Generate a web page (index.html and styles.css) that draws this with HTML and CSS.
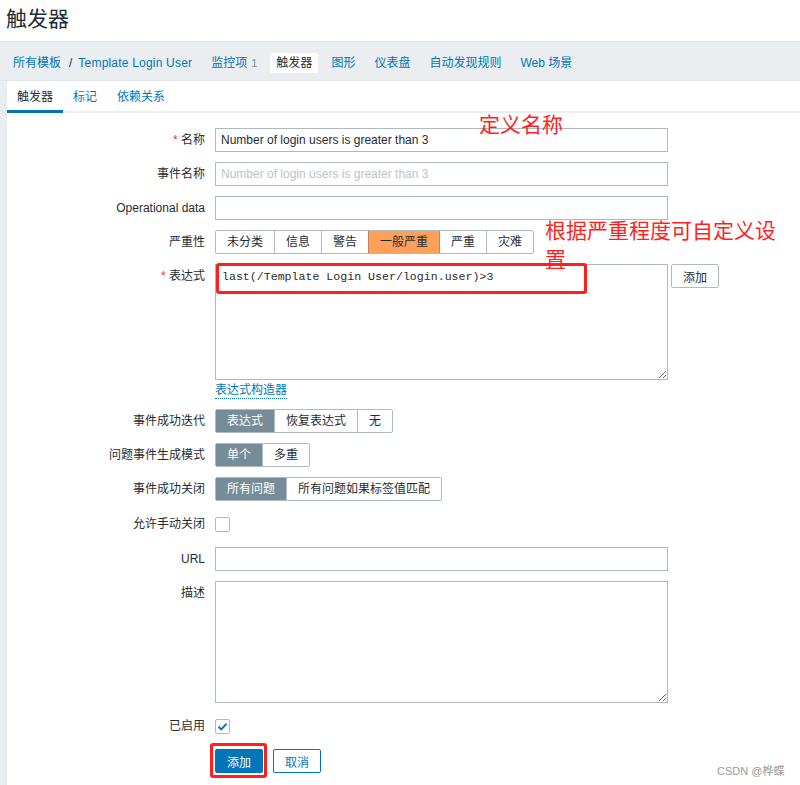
FILE: index.html
```html
<!DOCTYPE html>
<html lang="zh">
<head>
<meta charset="utf-8">
<title>触发器</title>
<link rel="stylesheet" href="styles.css">
</head>
<body>
<header class="header"><h1 class="title">触发器</h1></header>
<nav class="nav">
  <div class="nav-item crumbs"><a class="lnk">所有模板</a><span class="sep">/</span><a class="lnk wide">Template Login User</a></div>
  <div class="nav-item"><a class="lnk">监控项</a><sup class="count">1</sup></div>
  <div class="nav-item active">触发器</div>
  <div class="nav-item"><a class="lnk">图形</a></div>
  <div class="nav-item"><a class="lnk">仪表盘</a></div>
  <div class="nav-item"><a class="lnk">自动发现规则</a></div>
  <div class="nav-item"><a class="lnk">Web 场景</a></div>
</nav>
<main class="panel">
  <div class="tabs">
    <div class="tab active">触发器</div>
    <div class="tab">标记</div>
    <div class="tab">依赖关系</div>
  </div>
  <form class="form">
    <label class="lbl"><span class="req">*</span> 名称</label>
    <div class="field"><input class="inp" type="text" value="Number of login users is greater than 3"></div>

    <label class="lbl">事件名称</label>
    <div class="field"><input class="inp" type="text" placeholder="Number of login users is greater than 3"></div>

    <label class="lbl">Operational data</label>
    <div class="field"><input class="inp" type="text"></div>

    <label class="lbl">严重性</label>
    <div class="field"><div class="seg"><span>未分类</span><span>信息</span><span>警告</span><span class="sev-on">一般严重</span><span>严重</span><span>灾难</span></div></div>

    <label class="lbl"><span class="req">*</span> 表达式</label>
    <div class="field">
      <div class="expr-row">
        <textarea class="area expr">last(/Template Login User/login.user)&gt;3</textarea>
        <button type="button" class="btn-alt">添加</button>
      </div>
      <a class="builder">表达式构造器</a>
    </div>

    <label class="lbl">事件成功迭代</label>
    <div class="field"><div class="seg"><span class="on">表达式</span><span>恢复表达式</span><span>无</span></div></div>

    <label class="lbl">问题事件生成模式</label>
    <div class="field"><div class="seg"><span class="on">单个</span><span>多重</span></div></div>

    <label class="lbl">事件成功关闭</label>
    <div class="field"><div class="seg"><span class="on">所有问题</span><span>所有问题如果标签值匹配</span></div></div>

    <label class="lbl tall">允许手动关闭</label>
    <div class="field tall"><span class="chk"></span></div>

    <label class="lbl">URL</label>
    <div class="field"><input class="inp" type="text"></div>

    <label class="lbl">描述</label>
    <div class="field"><textarea class="area desc"></textarea></div>

    <label class="lbl tall">已启用</label>
    <div class="field tall"><span class="chk checked"><svg width="13" height="13" viewBox="0 0 13 13"><path d="M2.5 6.8 L5.3 9.4 L10.6 3.6" fill="none" stroke="#0275b8" stroke-width="2"/></svg></span></div>

    <div></div>
    <div class="field actions"><button type="button" class="btn-main">添加</button><button type="button" class="btn-cancel">取消</button></div>
  </form>
</main>

<div class="note note-name">定义名称</div>
<div class="note note-sev"><span class="line">根据严重程度可自定义设</span><span class="line">置</span></div>
<div class="mark mark-expr"></div>
<div class="mark mark-add"></div>
<div class="watermark">CSDN @桦蝶</div>
</body>
</html>
```

FILE: styles.css
```css
html {
  background: #ebeef0;
}
body {
  margin: 0;
  position: relative;
  min-height: 785px;
  font-family: "Liberation Sans", Arial, "Noto Sans CJK SC", sans-serif;
  font-size: 12px;
  color: #1f2c33;
}
.header {
  background: #fff;
  height: 41px;
  box-sizing: border-box;
  padding: 6px 0 0 6px;
}
.title {
  margin: 0;
  font-weight: normal;
  font-size: 21px;
  line-height: 26px;
}
.nav {
  display: flex;
  align-items: center;
  gap: 7px;
  height: 40px;
  box-sizing: border-box;
  padding: 3px 0 0 7px;
  border-top: 1px solid #dfe4e7;
  border-bottom: 1px solid #dfe4e7;
}
.nav-item {
  height: 20px;
  line-height: 20px;
  padding: 0 6px;
  border-radius: 2px;
  white-space: nowrap;
}
.nav-item.active {
  background: #fff;
  color: #1f2c33;
}
.lnk {
  color: #0275b8;
}
.lnk.wide {
  letter-spacing: 0.2px;
}
.sep {
  color: #1f2c33;
  margin: 0 6px 0 8px;
}
.count {
  color: #768d99;
  font-size: 11px;
  vertical-align: baseline;
  margin-left: 4px;
}
.panel {
  margin-left: 7px;
  background: #fff;
  min-height: 704px;
}
.tabs {
  display: flex;
  box-shadow: inset 0 -2px 0 #ebeef0;
}
.tab {
  padding: 4px 10px 0;
  line-height: 25px;
  border-bottom: 3px solid transparent;
  color: #0275b8;
}
.tab.active {
  color: #1f2c33;
  border-bottom-color: #0275b8;
}
.form {
  display: grid;
  grid-template-columns: 198px auto;
  column-gap: 10px;
  row-gap: 10px;
  padding-top: 15px;
}
.lbl {
  text-align: right;
  line-height: 24px;
  white-space: nowrap;
}
.lbl.tall, .field.tall {
  line-height: 26px;
  height: 26px;
}
.req {
  color: #e33734;
}
.field {
  min-height: 24px;
}
.field.tall {
  display: flex;
  align-items: center;
}
.inp {
  box-sizing: border-box;
  width: 453px;
  height: 24px;
  border: 1px solid #acbbc2;
  border-radius: 0;
  padding: 0 5px;
  margin: 0;
  font: 12px "Liberation Sans", Arial, "Noto Sans CJK SC", sans-serif;
  color: #1f2c33;
  background: #fff;
  display: block;
}
.inp::placeholder {
  color: #b9c4c9;
}
.seg {
  display: inline-flex;
  border: 1px solid #acbbc2;
  border-radius: 2px;
  height: 24px;
  box-sizing: border-box;
}
.seg span {
  padding: 0 11px;
  line-height: 22px;
  border-left: 1px solid #acbbc2;
  white-space: nowrap;
}
.seg span:first-child {
  border-left: 0;
}
.seg span.on {
  background: #768d99;
  color: #fff;
  border-color: #768d99;
}
.seg span.sev-on {
  background: #ffa059;
  border-left-color: #c7825a;
  border-right: 1px solid #c7825a;
  margin-right: -1px;
}
.seg span.sev-on + span {
  border-left-color: #c7825a;
}
.expr-row {
  display: flex;
  align-items: flex-start;
  gap: 3px;
}
.area {
  box-sizing: border-box;
  width: 453px;
  border: 1px solid #acbbc2;
  border-radius: 0;
  margin: 0;
  padding: 6px 6px;
  display: block;
  background: #fff;
  color: #1f2c33;
}
.expr {
  height: 116px;
  font: 11.6px "Liberation Mono", "Courier New", monospace;
  line-height: 12px;
}
.desc {
  height: 122px;
  font: 12px "Liberation Sans", Arial, sans-serif;
}
.btn-alt {
  height: 24px;
  box-sizing: border-box;
  padding: 0 11px;
  border: 1px solid #acbbc2;
  border-radius: 2px;
  background: #fff;
  color: #1f2c33;
  font: 12px "Liberation Sans", Arial, "Noto Sans CJK SC", sans-serif;
  margin: 0;
}
.builder {
  display: inline-block;
  margin-top: 3px;
  line-height: 15px;
  color: #0275b8;
  border-bottom: 1px dotted #0275b8;
}
.chk {
  width: 15px;
  height: 15px;
  box-sizing: border-box;
  border: 1px solid #acbbc2;
  border-radius: 2px;
  background: #fff;
  display: flex;
  align-items: center;
  justify-content: center;
}
.actions {
  display: flex;
  gap: 10px;
}
.btn-main, .btn-cancel {
  height: 24px;
  box-sizing: border-box;
  padding: 0 11px;
  border: 1px solid #0275b8;
  border-radius: 2px;
  font: 12px "Liberation Sans", Arial, "Noto Sans CJK SC", sans-serif;
  margin: 0;
}
.btn-main {
  background: #0275b8;
  color: #fff;
}
.btn-cancel {
  background: #fff;
  color: #0275b8;
}
.note {
  position: absolute;
  color: #ff1f1f;
  font-family: "Noto Sans CJK SC", sans-serif;
}
.note-name {
  left: 479px;
  top: 108px;
  font-size: 21px;
  line-height: 30px;
}
.note-sev {
  left: 545px;
  top: 215px;
  display: flex;
  flex-direction: column;
  align-items: flex-start;
  font-size: 21px;
  line-height: 29px;
  white-space: nowrap;
}
.mark {
  position: absolute;
  border: 3px solid #ff1f1f;
  border-radius: 3px;
  box-sizing: border-box;
}
.mark-expr {
  left: 216px;
  top: 263px;
  width: 371px;
  height: 31px;
}
.mark-add {
  left: 210px;
  top: 743px;
  width: 57px;
  height: 35px;
}
.watermark {
  position: absolute;
  left: 717px;
  top: 762px;
  font-size: 11px;
  color: #9a9a9a;
  font-family: "Liberation Sans", "Noto Sans CJK SC", sans-serif;
}
```
